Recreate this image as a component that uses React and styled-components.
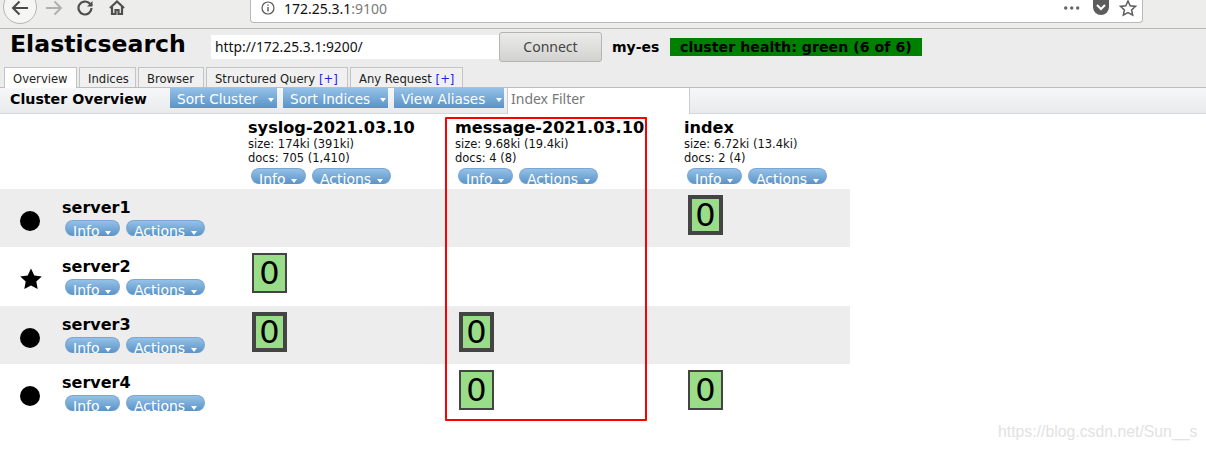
import React from 'react'
import styled, { createGlobalStyle } from 'styled-components'

const Global = createGlobalStyle`
  html, body {
    margin: 0;
    padding: 0;
    background: #fff;
    font-family: "DejaVu Sans", sans-serif;
    overflow: hidden;
  }
`

const Page = styled.div`
  position: relative;
  width: 1206px;
  height: 449px;
  overflow: hidden;
`

const BrowserBar = styled.div`
  display: flex;
  height: 28px;
  background: #ededec;
  border-bottom: 1px solid #b9b9b7;
  box-sizing: content-box;
`

const NavIcons = styled.div`
  display: flex;
  width: 250px;
  flex: none;
  overflow: hidden;
`

const UrlBar = styled.div`
  display: flex;
  align-items: flex-start;
  width: 891px;
  height: 22px;
  background: #fff;
  border: 1px solid #b8b8b6;
  border-top: 0;
  border-radius: 0 0 4px 4px;
  box-sizing: content-box;
`

const UrlIcon = styled.svg`
  margin: 1px 0 0 10px;
  flex: none;
`

const UrlText = styled.div`
  margin-left: 9px;
  padding-top: 0;
  font-family: "Noto Sans", sans-serif;
  font-size: 14px;
  line-height: 17px;
  color: #111;
  flex: 1;
  white-space: nowrap;
  span {
    color: #7a7a7a;
  }
`

const UrlActions = styled.svg`
  flex: none;
  margin-right: 3px;
`

const Header = styled.div`
  display: flex;
  align-items: flex-start;
  height: 38px;
  background: #ececec;
`

const Title = styled.h1`
  margin: 0;
  width: 211px;
  padding: 0 0 0 10px;
  box-sizing: border-box;
  font-size: 23.6px;
  line-height: 30px;
  font-weight: 700;
  color: #000;
`

const UrlInput = styled.div`
  width: 288px;
  height: 24px;
  margin-top: 6px;
  padding-left: 4px;
  box-sizing: border-box;
  background: #fff;
  font-family: "Noto Sans", sans-serif;
  font-size: 13.8px;
  line-height: 24px;
  color: #111;
`

const ConnectBtn = styled.div`
  width: 103px;
  height: 30px;
  margin-top: 3px;
  box-sizing: border-box;
  border: 1px solid #b4b4b2;
  border-radius: 3px;
  background: linear-gradient(#ebebea, #d2d2d0);
  text-align: center;
  font-family: "Noto Sans", sans-serif;
  font-size: 14px;
  line-height: 28px;
  color: #444;
`

const ClusterName = styled.div`
  margin: 9px 0 0 10px;
  width: 58px;
  font-size: 14px;
  line-height: 18px;
  font-weight: 700;
  color: #000;
`

const Health = styled.div`
  width: 252px;
  height: 18px;
  margin-top: 9px;
  padding-left: 10px;
  box-sizing: border-box;
  background: #008000;
  font-size: 14.2px;
  line-height: 18px;
  font-weight: 700;
  color: #000;
  white-space: nowrap;
`

const Tabs = styled.div`
  display: flex;
  align-items: flex-end;
  gap: 2px;
  height: 20px;
  padding-left: 4px;
  background: #ececec;
`

const Tab = styled.div`
  position: relative;
  width: ${p => p.$w}px;
  height: ${p => (p.$active ? '21px' : '20px')};
  margin-bottom: ${p => (p.$active ? '-1px' : '0')};
  padding: 0 0 0 8px;
  box-sizing: border-box;
  background: ${p => (p.$active ? '#fff' : '#f0f0f0')};
  border: 1px solid #c4c4c4;
  border-bottom: 0;
  font-size: 11.6px;
  line-height: 22px;
  color: #222;
  white-space: nowrap;
  z-index: ${p => (p.$active ? 1 : 0)};
  b {
    font-weight: 400;
    color: #2222e6;
  }
`

const Toolbar = styled.div`
  display: flex;
  height: 27px;
  box-sizing: border-box;
  background: linear-gradient(#f6f7f9, #e8eaec);
  border-top: 1px solid #bdbdbd;
  border-bottom: 1px solid #d6d9db;
`

const ToolbarTitle = styled.div`
  width: 170px;
  padding-left: 10px;
  box-sizing: border-box;
  font-size: 14.2px;
  line-height: 22px;
  font-weight: 700;
  color: #000;
  white-space: nowrap;
`

const Caret = styled.span`
  display: inline-block;
  width: 0;
  height: 0;
  margin-left: 6px;
  vertical-align: 2px;
  border-left: 3.5px solid transparent;
  border-right: 3.5px solid transparent;
  border-top: 4px solid #fff;
`

const SortBtn = styled.div`
  width: ${p => p.$w}px;
  height: 20px;
  margin-right: 6px;
  box-sizing: border-box;
  padding-left: 7px;
  background: linear-gradient(#94c1e8, #5a93c6);
  font-size: 13.6px;
  line-height: 22px;
  color: #fff;
  white-space: nowrap;
`

const FilterInput = styled.div`
  width: 183px;
  height: 26px;
  margin-left: -3px;
  box-sizing: border-box;
  padding-left: 3px;
  background: #fff;
  border-left: 1px solid #ccc;
  border-right: 1px solid #ccc;
  font-family: "Noto Sans", sans-serif;
  font-size: 14px;
  line-height: 21px;
  color: #777;
`

const Table = styled.div`
  width: 850px;
  padding-top: 1px;
`

const Row = styled.div`
  display: grid;
  grid-template-columns: 244px 207px 229px 170px;
  height: ${p => p.$h}px;
  background: ${p => (p.$shade ? '#ededed' : 'transparent')};
`

const ColHead = styled.div`
  padding: 4px 0 0 4px;
`

const IndexName = styled.div`
  font-size: 16.15px;
  line-height: 18px;
  font-weight: 700;
  color: #000;
  white-space: nowrap;
`

const Stat = styled.div`
  font-size: 11.5px;
  line-height: 14px;
  color: #111;
  white-space: nowrap;
`

const PillRow = styled.div`
  display: flex;
  gap: 6px;
  margin: ${p => p.$m};
`

const Pill = styled.div`
  width: ${p => p.$w}px;
  height: 16px;
  overflow: hidden;
  box-sizing: border-box;
  padding-left: 7px;
  border: 1px solid #7ba6d2;
  border-bottom: 0;
  border-radius: 8px;
  background: linear-gradient(#94c1e8, #5a93c6);
  font-size: 14px;
  line-height: 20px;
  color: #fff;
  white-space: nowrap;
  ${Caret} {
    margin-left: 1px;
    vertical-align: 1px;
  }
`

const NodeCell = styled.div`
  display: flex;
  align-items: flex-start;
`

const Marker = styled.div`
  display: flex;
  justify-content: center;
  width: 60px;
  flex: none;
  padding-top: ${p => p.$top}px;
`

const Dot = styled.div`
  width: 20px;
  height: 20px;
  border-radius: 50%;
  background: #000;
`

const NodeName = styled.div`
  margin: ${p => 10 + p.$nudge}px 0 0 2px;
  font-size: 16px;
  line-height: 18px;
  font-weight: 700;
  color: #000;
`

const ShardCell = styled.div`
  padding: 6px 0 0 8px;
`

const Shard = styled.div`
  width: 35px;
  height: 40px;
  box-sizing: border-box;
  border: ${p => (p.$primary ? 4 : 2)}px solid #444;
  background: #99dd88;
  font-size: 32px;
  line-height: ${p => (p.$primary ? 32 : 36)}px;
  text-align: center;
  color: #000;
  overflow: hidden;
`

const Highlight = styled.div`
  position: absolute;
  left: 445px;
  top: 117px;
  width: 202px;
  height: 304px;
  box-sizing: border-box;
  border: 2px solid #f00;
  border-radius: 1px;
`

const Watermark = styled.div`
  position: absolute;
  left: 998px;
  top: 422px;
  font-family: "Liberation Sans", sans-serif;
  font-size: 15.8px;
  line-height: 20px;
  color: #e2e2e2;
  white-space: nowrap;
`

const Arrow = ({ children }) => (
  <>
    {children} <Caret />
  </>
)

const Pills = ({ m }) => (
  <PillRow $m={m}>
    <Pill $w={55}><Arrow>Info</Arrow></Pill>
    <Pill $w={79}><Arrow>Actions</Arrow></Pill>
  </PillRow>
)

const indices = [
  { name: 'syslog-2021.03.10', size: 'size: 174ki (391ki)', docs: 'docs: 705 (1,410)' },
  { name: 'message-2021.03.10', size: 'size: 9.68ki (19.4ki)', docs: 'docs: 4 (8)' },
  { name: 'index', size: 'size: 6.72ki (13.4ki)', docs: 'docs: 2 (4)' },
]

// null = no shard, true = primary (thick border)
const nodes = [
  { name: 'server1', h: 58, shade: true, nudge: 0, shards: [null, null, true] },
  { name: 'server2', h: 59, master: true, nudge: 1, shards: [false, null, null] },
  { name: 'server3', h: 58, shade: true, nudge: 0, shards: [true, true, null] },
  { name: 'server4', h: 58, nudge: 0, shards: [null, false, false] },
]

export default function App() {
  return (
    <Page>
      <Global />
      <BrowserBar>
        <NavIcons>
          <svg width="250" height="28" viewBox="0 0 250 28" fill="none">
            <circle cx="20" cy="7" r="16.5" fill="#f6f6f5" stroke="#b5b5b3" />
            <path d="M28 8H13M19.5 1.5 13 8l6.500 6.500" stroke="#4a4a4a" strokeWidth="2" />
            <path d="M61 8H46M54.500 1.500 61 8l-6.500 6.500" stroke="#b0b0b0" strokeWidth="2" />
            <path d="M91.500 8a6.500 6.500 0 1 1-2-4.700L92 5.500" stroke="#4e4e4e" strokeWidth="2.200" />
            <path d="M92.500 1v5.500H87z" fill="#4e4e4e" />
            <path d="M110 8l7-6.500 7 6.500M112 7v7h3.500v-4h3v4h3.500V7" stroke="#4e4e4e" strokeWidth="2.200" />
          </svg>
        </NavIcons>
        <UrlBar>
          <UrlIcon width="14" height="14" viewBox="0 0 14 14" fill="none">
            <circle cx="7" cy="7" r="6" stroke="#555" strokeWidth="1.200" />
            <path d="M7 6v4.500M7 3.500v1.300" stroke="#555" strokeWidth="1.400" />
          </UrlIcon>
          <UrlText>172.25.3.1<span>:9100</span></UrlText>
          <UrlActions width="92" height="22" viewBox="0 0 92 22" fill="none">
            <circle cx="18.700" cy="8" r="1.700" fill="#666" />
            <circle cx="24.700" cy="8" r="1.700" fill="#666" />
            <circle cx="30.700" cy="8" r="1.700" fill="#666" />
            <path d="M46 0h16v7a8 8 0 0 1-16 0z" fill="#5c5c5c" />
            <path d="M50 5l4 4 4-4" stroke="#fff" strokeWidth="2" />
            <path d="M81 1l2.200 4.800 5.300.6-3.900 3.500 1.100 5.200L81 12.500l-4.700 2.600 1.100-5.200-3.900-3.500 5.300-.6z" stroke="#5c5c5c" strokeWidth="1.500" />
          </UrlActions>
        </UrlBar>
      </BrowserBar>

      <Header>
        <Title>Elasticsearch</Title>
        <UrlInput>http://172.25.3.1:9200/</UrlInput>
        <ConnectBtn>Connect</ConnectBtn>
        <ClusterName>my-es</ClusterName>
        <Health>cluster health: green (6 of 6)</Health>
      </Header>

      <Tabs>
        <Tab $active $w={73}>Overview</Tab>
        <Tab $w={57}>Indices</Tab>
        <Tab $w={66}>Browser</Tab>
        <Tab $w={142}>Structured Query <b>[+]</b></Tab>
        <Tab $w={113}>Any Request <b>[+]</b></Tab>
      </Tabs>

      <Toolbar>
        <ToolbarTitle>Cluster Overview</ToolbarTitle>
        <SortBtn $w={107}><Arrow>Sort Cluster</Arrow></SortBtn>
        <SortBtn $w={105}><Arrow>Sort Indices</Arrow></SortBtn>
        <SortBtn $w={110}><Arrow>View Aliases</Arrow></SortBtn>
        <FilterInput>Index Filter</FilterInput>
      </Toolbar>

      <Table>
        <Row $h={74}>
          <div />
          {indices.map(ix => (
            <ColHead key={ix.name}>
              <IndexName>{ix.name}</IndexName>
              <Stat>{ix.size}</Stat>
              <Stat>{ix.docs}</Stat>
              <Pills m="3px 0 0 3px" />
            </ColHead>
          ))}
        </Row>
        {nodes.map(node => (
          <Row key={node.name} $h={node.h} $shade={node.shade}>
            <NodeCell>
              <Marker $top={node.master ? 20 : 22}>
                {node.master ? (
                  <svg width="24" height="24" viewBox="-1 0 24 24">
                    <path d="M12 1.500l3.300 7 7.500.9-5.500 5.200 1.400 7.500L12 18.400l-6.700 3.700 1.400-7.500L1.200 9.400l7.500-.9z" fill="#000" />
                  </svg>
                ) : (
                  <Dot />
                )}
              </Marker>
              <div>
                <NodeName $nudge={node.nudge}>{node.name}</NodeName>
                <Pills m="3px 0 0 5px" />
              </div>
            </NodeCell>
            {node.shards.map((s, i) => (
              <ShardCell key={i}>
                {s !== null && <Shard $primary={s}>0</Shard>}
              </ShardCell>
            ))}
          </Row>
        ))}
      </Table>

      <Highlight />
      <Watermark>https://blog.csdn.net/Sun__s</Watermark>
    </Page>
  )
}
